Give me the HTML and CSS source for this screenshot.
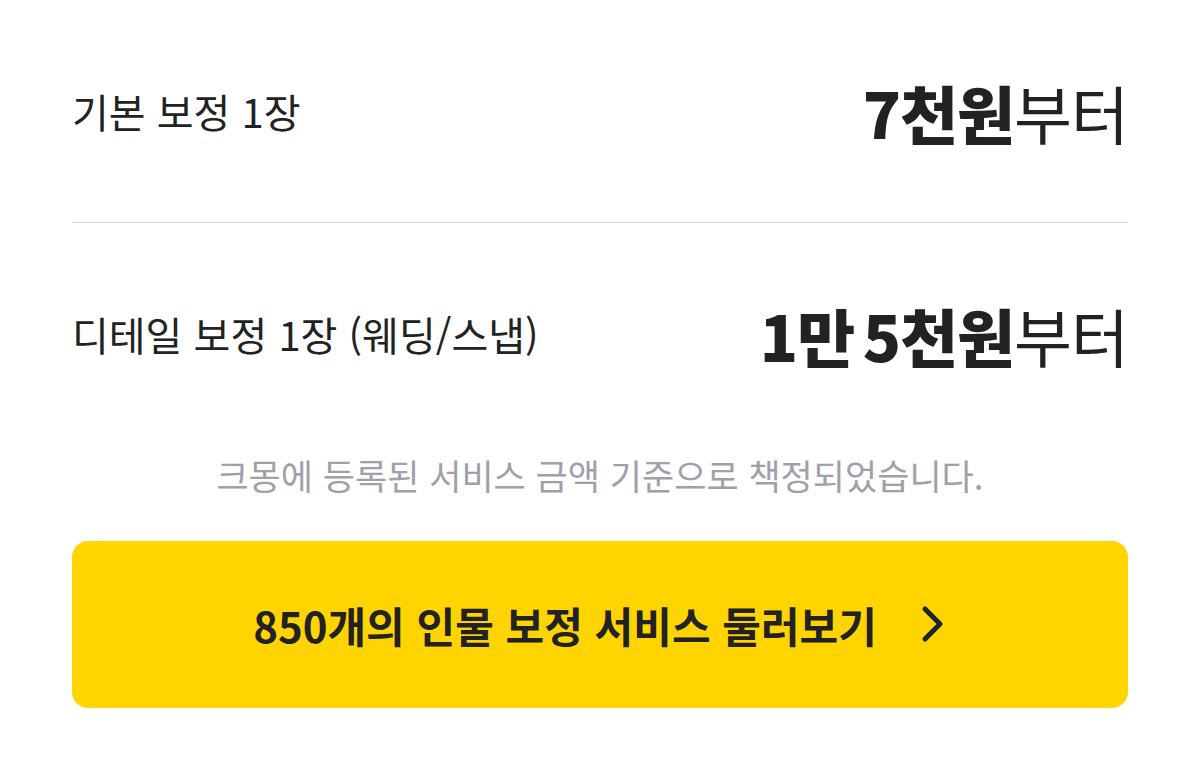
FILE: index.html
```html
<!DOCTYPE html>
<html lang="ko">
<head>
    <meta charset="UTF-8">
    <meta name="viewport" content="width=device-width, initial-scale=1.0">
    <title>인물 보정 가격</title>
    <link rel="stylesheet" href="styles.css">
</head>
<body>
    <div class="container">
        <div class="price-row">
            <span class="label">기본 보정 1장</span>
            <span class="price"><b>7천원</b>부터</span>
        </div>
        <div class="price-row">
            <span class="label">디테일 보정 1장 (웨딩/스냅)</span>
            <span class="price"><b>1만 5천원</b>부터</span>
        </div>
        <p class="note">크몽에 등록된 서비스 금액 기준으로 책정되었습니다.</p>
        <a class="more-btn" href="#">
            <span>850개의 인물 보정 서비스 둘러보기</span>
            <svg class="chevron" width="26" height="40" viewBox="0 0 26 40">
                <path d="M4 4 L19 19 L4 34" fill="none" stroke="#222" stroke-width="5" stroke-linecap="round" stroke-linejoin="round"/>
            </svg>
        </a>
    </div>
</body>
</html>
```

FILE: styles.css
```css
body {
    font-family: "Noto Sans CJK KR", "Noto Sans", sans-serif;
    background-color: #fff;
    color: #222;
    margin: 0;
}
.container {
    padding: 0 72px;
}
.price-row {
    display: flex;
    align-items: center;
    justify-content: space-between;
    height: 222px;
}
.price-row + .price-row {
    border-top: 1px solid #d4d4d4;
}
.label {
    font-size: 40px;
}
.price {
    font-size: 63px;
    letter-spacing: -1px;
    word-spacing: -8px;
}
.price b {
    font-weight: 900;
}
.note {
    margin: 5px 0 42px;
    line-height: 1.4;
    text-align: center;
    font-size: 35px;
    color: #a0a0aa;
}
.more-btn {
    display: flex;
    align-items: center;
    justify-content: center;
    gap: 44px;
    height: 167px;
    background: #ffd400;
    border-radius: 16px;
    color: #222;
    text-decoration: none;
    font-size: 42px;
    font-weight: 700;
}
```
